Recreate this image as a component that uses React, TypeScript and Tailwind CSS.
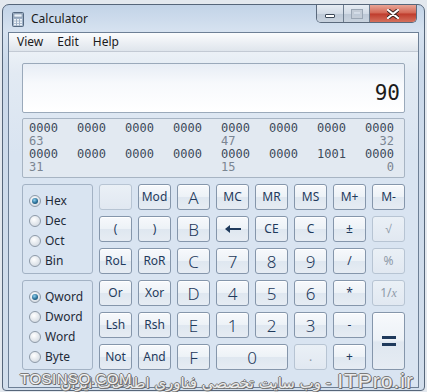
import React from 'react';

const ui = "font-['Segoe_UI','Noto_Sans',sans-serif]";

type Btn = {
  label: React.ReactNode;
  big?: boolean;
  disabled?: boolean;
  cls?: string;
};

function BackArrow() {
  return (
    <svg width="18" height="10" viewBox="0 0 18 10">
      <path d="M1 5 L6 1 L6 4 L17 4 L17 6 L6 6 L6 9 Z" fill="#1f3a5c" />
    </svg>
  );
}

function EqualsSign() {
  return (
    <svg width="14" height="10" viewBox="0 0 14 10">
      <rect x="0" y="0" width="14" height="3" fill="#1f3a5c" />
      <rect x="0" y="7" width="14" height="3" fill="#1f3a5c" />
    </svg>
  );
}

const buttons: Btn[] = [
  // row 1
  { label: '', disabled: true },
  { label: 'Mod' },
  { label: 'A', big: true },
  { label: 'MC' },
  { label: 'MR' },
  { label: 'MS' },
  { label: 'M+' },
  { label: 'M-' },
  // row 2
  { label: '(' },
  { label: ')' },
  { label: 'B', big: true },
  { label: <BackArrow /> },
  { label: 'CE' },
  { label: 'C' },
  { label: '±' },
  { label: '√', disabled: true },
  // row 3
  { label: 'RoL' },
  { label: 'RoR' },
  { label: 'C', big: true },
  { label: '7', big: true },
  { label: '8', big: true },
  { label: '9', big: true },
  { label: '/' },
  { label: '%', disabled: true },
  // row 4
  { label: 'Or' },
  { label: 'Xor' },
  { label: 'D', big: true },
  { label: '4', big: true },
  { label: '5', big: true },
  { label: '6', big: true },
  { label: '*' },
  {
    label: (
      <span>
        1/<i className="font-['Liberation_Serif',serif]">x</i>
      </span>
    ),
    disabled: true,
  },
  // row 5
  { label: 'Lsh' },
  { label: 'Rsh' },
  { label: 'E', big: true },
  { label: '1', big: true },
  { label: '2', big: true },
  { label: '3', big: true },
  { label: '-' },
  { label: <EqualsSign />, cls: 'row-span-2' },
  // row 6
  { label: 'Not' },
  { label: 'And' },
  { label: 'F', big: true },
  { label: '0', big: true, cls: 'col-span-2' },
  { label: '.', disabled: true },
  { label: '+' },
];

function CalcButton({ b }: { b: Btn }) {
  const base = 'flex items-center justify-center rounded-[3px] border leading-none';
  const look = b.disabled
    ? 'border-[#b7c4d3] bg-[linear-gradient(to_bottom,#eaf0f6,#e1e8f1)] text-[#8d99a8]'
    : 'border-[#8596ab] bg-[linear-gradient(to_bottom,#f7f9fc_0%,#edf2f7_48%,#dfe7f0_52%,#e6ecf3_100%)] text-[#1f3a5c] shadow-[inset_0_1px_0_#ffffff]';
  const size = b.big ? 'text-[17px] font-light' : 'text-[12px]';
  return <div className={`${base} ${look} ${size} ${b.cls ?? ''}`}>{b.label}</div>;
}

function Radio({ label, checked }: { label: string; checked?: boolean }) {
  return (
    <div className="flex items-center gap-[4px] h-[20px]">
      <div className="w-[12px] h-[12px] rounded-full border border-[#8e9aa8] bg-[radial-gradient(circle_at_40%_35%,#ffffff,#dfe4ea_60%,#c9d0d8)] flex items-center justify-center">
        {checked && (
          <div className="w-[6px] h-[6px] rounded-full bg-[radial-gradient(circle_at_40%_35%,#8fd0f0,#2a6f96_55%,#173f5c)]" />
        )}
      </div>
      <span className="text-[12px] text-[#1e2a38]">{label}</span>
    </div>
  );
}

function RadioGroup({ items, checked }: { items: string[]; checked: string }) {
  return (
    <div className="h-[90px] rounded-[3px] border border-[#a3b2c4] pl-[6px] pt-[6px]">
      {items.map((it) => (
        <Radio key={it} label={it} checked={it === checked} />
      ))}
    </div>
  );
}

const bitRows = [
  { bits: ['0000', '0000', '0000', '0000', '0000', '0000', '0000', '0000'], idx: ['63', '47', '32'] },
  { bits: ['0000', '0000', '0000', '0000', '0000', '0000', '1001', '0000'], idx: ['31', '15', '0'] },
];

function BinaryPanel() {
  return (
    <div className="mt-[5px] h-[60px] rounded-[2px] border border-[#a7b4c3] bg-[#e2e9f1] pl-[6px] pt-[3px] font-['DejaVu_Sans_Mono',monospace] text-[12px] leading-[13px]">
      {bitRows.map((r, i) => (
        <div key={i}>
          <div className="grid grid-cols-[repeat(7,48px)_29px] text-[#3d4a5a]">
            {r.bits.map((b, j) => (
              <span key={j}>{b}</span>
            ))}
          </div>
          <div className="grid grid-cols-[repeat(7,48px)_29px] text-[#7b8592]">
            <span>{r.idx[0]}</span>
            <span />
            <span />
            <span />
            <span>{r.idx[1]}</span>
            <span />
            <span />
            <span className="text-right">{r.idx[2]}</span>
          </div>
        </div>
      ))}
    </div>
  );
}

function CalcIcon() {
  return (
    <svg width="12" height="15" viewBox="0 0 12 15">
      <rect x="0.5" y="0.5" width="11" height="14" rx="1" fill="#9fb1c6" stroke="#55687f" />
      <rect x="2" y="2" width="8" height="3" fill="#e9f1f9" stroke="#6f8299" strokeWidth="0.5" />
      {[0, 1, 2].map((r) =>
        [0, 1, 2].map((c) => (
          <rect key={`${r}${c}`} x={2 + c * 3} y={7 + r * 2.4} width="2" height="1.6" fill="#eef3f8" />
        ))
      )}
    </svg>
  );
}

function TitleBar() {
  return (
    <div className="h-[27px] flex items-start shrink-0">
      <div className="flex items-center h-full pl-[9px] gap-[7px] pt-[1px]">
        <CalcIcon />
        <span className="text-[12px] text-[#1b1b1b]">Calculator</span>
      </div>
      <div className="ml-auto mr-[7px] flex h-[18px] rounded-b-[5px] border border-t-0 border-[#5b6a7d] overflow-hidden">
        <div className="w-[27px] h-full border-r border-[#6d7c8e] bg-[linear-gradient(to_bottom,#e6ecf3,#d2dbe6_50%,#bcc8d6_51%,#c9d3df)] flex items-end justify-center pb-[4px]">
          <div className="w-[10px] h-[4px] rounded-[1px] border border-[#3c4857] bg-white" />
        </div>
        <div className="w-[26px] h-full border-r border-[#6d7c8e] bg-[linear-gradient(to_bottom,#e6ecf3,#d2dbe6_50%,#bcc8d6_51%,#c9d3df)] flex items-center justify-center">
          <div className="w-[10px] h-[8px] border-[2px] border-[#c3ccd7] shadow-[0_0_0_1px_#9aa6b4]" />
        </div>
        <div className="w-[46px] h-full bg-[linear-gradient(to_bottom,#e9a596,#d26553_48%,#bf3b2c_52%,#d4705d)] flex items-center justify-center">
          <svg width="12" height="10" viewBox="0 0 12 10">
            <path d="M1 1 L11 9 M11 1 L1 9" stroke="#3b2422" strokeWidth="4" strokeLinecap="round" />
            <path d="M1 1 L11 9 M11 1 L1 9" stroke="#ffffff" strokeWidth="2.2" strokeLinecap="round" />
          </svg>
        </div>
      </div>
    </div>
  );
}

function MenuBar() {
  return (
    <div className="h-[19px] shrink-0 flex items-center gap-[14px] pl-[8px] border-b border-[#c3cad4] bg-[linear-gradient(to_bottom,#fbfcfd,#eaeef3_60%,#dfe5ec)] text-[12px] text-[#1b1b1b]">
      <span>View</span>
      <span>Edit</span>
      <span>Help</span>
    </div>
  );
}

function Watermark() {
  const outline =
    '[text-shadow:-1px_0_#7a7a7a,1px_0_#7a7a7a,0_1px_#7a7a7a,0_-1px_#7a7a7a,1px_1px_#555]';
  return (
    <>
      <div
        dir="rtl"
        className={`absolute right-[13px] top-[365px] flex items-baseline gap-[6px] text-[#ececec] ${outline} font-['DejaVu_Sans',sans-serif]`}
      >
        <span className="text-[21px] font-['Liberation_Sans',sans-serif] tracking-[1px]">ITPro.ir</span>
        <span className="text-[15px]">- وب سایت تخصصی فناوری اطلاعات ایران</span>
      </div>
      <div
        className={`absolute left-[20px] top-[368px] text-[15px] tracking-[0.5px] text-[#f2f2f2] ${outline} font-['Liberation_Sans',sans-serif]`}
      >
        TOSINSO.COM
      </div>
    </>
  );
}

export default function App() {
  return (
    <div className={`relative w-[427px] h-[392px] overflow-hidden bg-[#e3e8ee] pt-[4px] pl-[2px] pr-[2px] pb-[1px] ${ui}`}>
      <div className="flex flex-col h-full rounded-t-[7px] rounded-b-[4px] border border-[#56667a] bg-[linear-gradient(to_bottom,#c2d3e7,#d6e2f0_26px,#cbd9ea_60px,#d2deec)]">
        <TitleBar />
        <div className="flex-1 mx-[5px] mb-[2px] flex flex-col border border-[#6d7f95] bg-[linear-gradient(to_bottom,#f4f7fa,#e2eaf3_40px,#d9e4f1_120px,#d9e4f1)]">
          <MenuBar />
          <div className="px-[13px] pt-[11px]">
            <div className="h-[50px] rounded-[2px] border border-[#9aa9ba] bg-[linear-gradient(to_bottom,#e7edf5,#f7f9fc_40%,#ffffff)] flex items-end justify-end pr-[4px] pb-[8px]">
              <span className="text-[21px] leading-none text-[#1b1b1b] font-['DejaVu_Sans_Mono',monospace]">90</span>
            </div>
            <BinaryPanel />
            <div className="mt-[6px] flex gap-[6px]">
              <div className="w-[71px] flex flex-col gap-[6px]">
                <RadioGroup items={['Hex', 'Dec', 'Oct', 'Bin']} checked="Hex" />
                <RadioGroup items={['Qword', 'Dword', 'Word', 'Byte']} checked="Qword" />
              </div>
              <div className="grid grid-cols-[repeat(8,33px)] auto-rows-[26px] gap-[6px]">
                {buttons.map((b, i) => (
                  <CalcButton key={i} b={b} />
                ))}
              </div>
            </div>
          </div>
        </div>
      </div>
      <Watermark />
    </div>
  );
}
